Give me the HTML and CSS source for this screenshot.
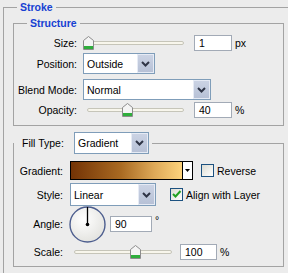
FILE: index.html
```html
<!DOCTYPE html>
<html lang="en">
<head>
    <meta charset="UTF-8">
    <title>Stroke</title>
    <link rel="stylesheet" href="styles.css">
</head>
<body>
    <fieldset class="outer">
        <legend class="title title-stroke">Stroke</legend>

        <fieldset class="section structure">
            <legend class="title title-structure">Structure</legend>

            <div class="row row-size">
                <span class="label">Size:</span>
                <div class="slider">
                    <div class="track"></div>
                    <svg class="thumb" style="left: 0px" width="11" height="14" viewBox="0 0 11 14"><path d="M0.5 4.5 L5.5 0.5 L10.5 4.5 L10.5 13.5 L0.5 13.5 Z" fill="#f4f4f4" stroke="#8c8c8c"/><rect x="1" y="10" width="9" height="3" fill="#2fae3c"/></svg>
                </div>
                <div class="field field-size">1</div>
                <span class="unit">px</span>
            </div>

            <div class="row row-position">
                <span class="label">Position:</span>
                <div class="combo combo-position">
                    <span class="combo-text">Outside</span>
                    <span class="combo-btn"><svg width="9" height="6" viewBox="0 0 9 6"><path d="M1 1 L4.5 4.5 L8 1" fill="none" stroke="#2f3546" stroke-width="2"/></svg></span>
                </div>
            </div>

            <div class="row row-blend">
                <span class="label">Blend Mode:</span>
                <div class="combo combo-blend">
                    <span class="combo-text">Normal</span>
                    <span class="combo-btn"><svg width="9" height="6" viewBox="0 0 9 6"><path d="M1 1 L4.5 4.5 L8 1" fill="none" stroke="#2f3546" stroke-width="2"/></svg></span>
                </div>
            </div>

            <div class="row row-opacity">
                <span class="label">Opacity:</span>
                <div class="slider">
                    <div class="track"></div>
                    <svg class="thumb" style="left: 39px" width="11" height="14" viewBox="0 0 11 14"><path d="M0.5 4.5 L5.5 0.5 L10.5 4.5 L10.5 13.5 L0.5 13.5 Z" fill="#f4f4f4" stroke="#8c8c8c"/><rect x="1" y="10" width="9" height="3" fill="#2fae3c"/></svg>
                </div>
                <div class="field field-size">40</div>
                <span class="unit">%</span>
            </div>
        </fieldset>

        <fieldset class="section fill">
            <legend class="fill-legend">
                <span class="fill-label">Fill Type:</span>
                <div class="combo combo-fill">
                    <span class="combo-text">Gradient</span>
                    <span class="combo-btn"><svg width="9" height="6" viewBox="0 0 9 6"><path d="M1 1 L4.5 4.5 L8 1" fill="none" stroke="#2f3546" stroke-width="2"/></svg></span>
                </div>
            </legend>

            <div class="row row-gradient">
                <span class="label label-fill">Gradient:</span>
                <div class="gradient">
                    <div class="gradient-fill"></div>
                    <div class="gradient-arrow"><svg width="5" height="3" viewBox="0 0 5 3"><path d="M0 0 L5 0 L2.5 3 Z" fill="#000"/></svg></div>
                </div>
                <span class="check check-reverse"></span>
                <span class="check-text">Reverse</span>
            </div>

            <div class="row row-style">
                <span class="label label-fill">Style:</span>
                <div class="combo combo-style">
                    <span class="combo-text">Linear</span>
                    <span class="combo-btn"><svg width="9" height="6" viewBox="0 0 9 6"><path d="M1 1 L4.5 4.5 L8 1" fill="none" stroke="#2f3546" stroke-width="2"/></svg></span>
                </div>
                <span class="check check-align"><svg width="11" height="11" viewBox="0 0 11 11"><path d="M2 5 L4.5 7.5 L9.5 2" fill="none" stroke="#21a121" stroke-width="2"/></svg></span>
                <span class="check-text">Align with Layer</span>
            </div>

            <div class="row row-angle">
                <span class="label label-fill">Angle:</span>
                <svg class="dial" width="37" height="37" viewBox="0 0 37 37">
                    <defs>
                        <radialGradient id="dialFill" cx="0.4" cy="0.35" r="0.7">
                            <stop offset="0" stop-color="#ffffff"/>
                            <stop offset="1" stop-color="#e2e2de"/>
                        </radialGradient>
                    </defs>
                    <circle cx="18.5" cy="18.5" r="17.5" fill="url(#dialFill)" stroke="#4c5d8e" stroke-width="1.4"/>
                    <line x1="18.5" y1="18.5" x2="18.5" y2="1" stroke="#000" stroke-width="1.3"/>
                    <circle cx="18.5" cy="18.5" r="1.8" fill="#000"/>
                </svg>
                <div class="field field-angle">90</div>
                <span class="unit unit-deg">°</span>
            </div>

            <div class="row row-scale">
                <span class="label label-fill">Scale:</span>
                <div class="slider slider-scale">
                    <div class="track"></div>
                    <svg class="thumb" style="left: 60px" width="11" height="14" viewBox="0 0 11 14"><path d="M0.5 4.5 L5.5 0.5 L10.5 4.5 L10.5 13.5 L0.5 13.5 Z" fill="#f4f4f4" stroke="#8c8c8c"/><rect x="1" y="10" width="9" height="3" fill="#2fae3c"/></svg>
                </div>
                <div class="field field-scale">100</div>
                <span class="unit">%</span>
            </div>
        </fieldset>
    </fieldset>
</body>
</html>
```

FILE: styles.css
```css
body {
    margin: 0;
    background-color: #ececec;
    font-family: 'Liberation Sans', Arial, sans-serif;
    font-size: 10.5px;
    color: #000;
}

/* cadre principal, coupe a droite et en bas comme la capture */
.outer {
    box-sizing: border-box;
    height: 272px;
    margin: 1px 0 0 3px;
    padding: 4px 0 0 9px;
    border: 1px solid #a3a3a3;
    border-right: 0;
    border-bottom: 0;
}

.title {
    color: #1641d2;
    font-weight: bold;
    font-size: 10.5px;
    line-height: 12px;
    padding: 0 3px;
}

.title-stroke {
    margin-left: 4px;
}

.title-structure {
    margin-left: 13px;
}

.section {
    box-sizing: border-box;
    width: 271px;
    margin: 0;
    border: 1px solid #a3a3a3;
    padding: 6px 0 7px 0;
}

.fill {
    margin-top: 6px;
    padding: 7px 0 6px 0;
}

.row {
    display: flex;
    align-items: center;
    height: 16px;
}

.label {
    width: 63px;
    margin-right: 6px;
    text-align: right;
    white-space: nowrap;
}

.label-fill {
    width: 49px;
    margin-right: 7px;
}

.row-position {
    margin-top: 2px;
    height: 21px;
}

.row-blend {
    margin-top: 5px;
    height: 21px;
}

.row-opacity {
    margin-top: 2px;
}

/* curseurs */
.slider {
    position: relative;
    width: 101px;
    height: 16px;
    display: flex;
    align-items: center;
}

.slider-scale {
    width: 102px;
}

.track {
    flex: 1;
    height: 2px;
    margin-left: 4px;
    border: 1px solid #c6c5b9;
    border-radius: 2px;
    background-color: #f8f6ec;
}

.thumb {
    position: absolute;
    top: 1px;
}

.field {
    box-sizing: border-box;
    height: 16px;
    border: 1px solid #a2aab6;
    background-color: #fff;
    line-height: 14px;
    padding-left: 4px;
}

.field-size {
    width: 38px;
    margin-left: 10px;
}

.field-angle {
    width: 42px;
    margin-left: 4px;
}

.field-scale {
    width: 37px;
    margin-left: 8px;
}

.unit {
    margin-left: 3px;
}

.unit-deg {
    align-self: flex-start;
    margin-top: 8px;
}

/* listes deroulantes */
.combo {
    box-sizing: border-box;
    display: flex;
    height: 21px;
    border: 1px solid #7f9db9;
    background-color: #fff;
}

.combo-text {
    flex: 1;
    padding-left: 3px;
    line-height: 20px;
}

.combo-btn {
    box-sizing: border-box;
    width: 17px;
    display: flex;
    align-items: center;
    justify-content: center;
    background: linear-gradient(#cbd3e4, #b7c1d6);
    border: 1px solid #e6ebf5;
}

.combo-position {
    width: 72px;
}

.combo-blend {
    width: 128px;
}

.combo-fill {
    width: 75px;
    height: 22px;
}

.combo-style {
    width: 86px;
    height: 23px;
}

.combo-style .combo-text {
    line-height: 22px;
}

.fill-legend {
    display: flex;
    align-items: center;
    padding: 0 3px 0 8px;
    height: 22px;
}

.fill-label {
    width: 52px;
}

/* degrade */
.row-gradient {
    height: 19px;
}

.gradient {
    box-sizing: border-box;
    width: 123px;
    height: 19px;
    display: flex;
    border: 1px solid #000;
}

.gradient-fill {
    flex: 1;
    background: linear-gradient(90deg, #733305, #a96a22 45%, #dea958 75%, #fdd37c);
}

.gradient-arrow {
    width: 9px;
    border-left: 1px solid #000;
    background-color: #fff;
    display: flex;
    align-items: center;
    justify-content: center;
}

.check {
    box-sizing: border-box;
    width: 13px;
    height: 13px;
    border: 1px solid #1c5180;
    background: linear-gradient(135deg, #dcdcd3, #ffffff);
    display: flex;
    align-items: center;
    justify-content: center;
}

.check-reverse {
    margin-left: 8px;
}

.check-align {
    margin-left: 14px;
}

.check-text {
    margin-left: 3px;
    white-space: nowrap;
}

.row-style {
    margin-top: 3px;
    height: 23px;
}

.row-angle {
    height: 36px;
}

.dial {
    margin-left: -1px;
}

.row-scale {
    margin-top: 2px;
}
```
